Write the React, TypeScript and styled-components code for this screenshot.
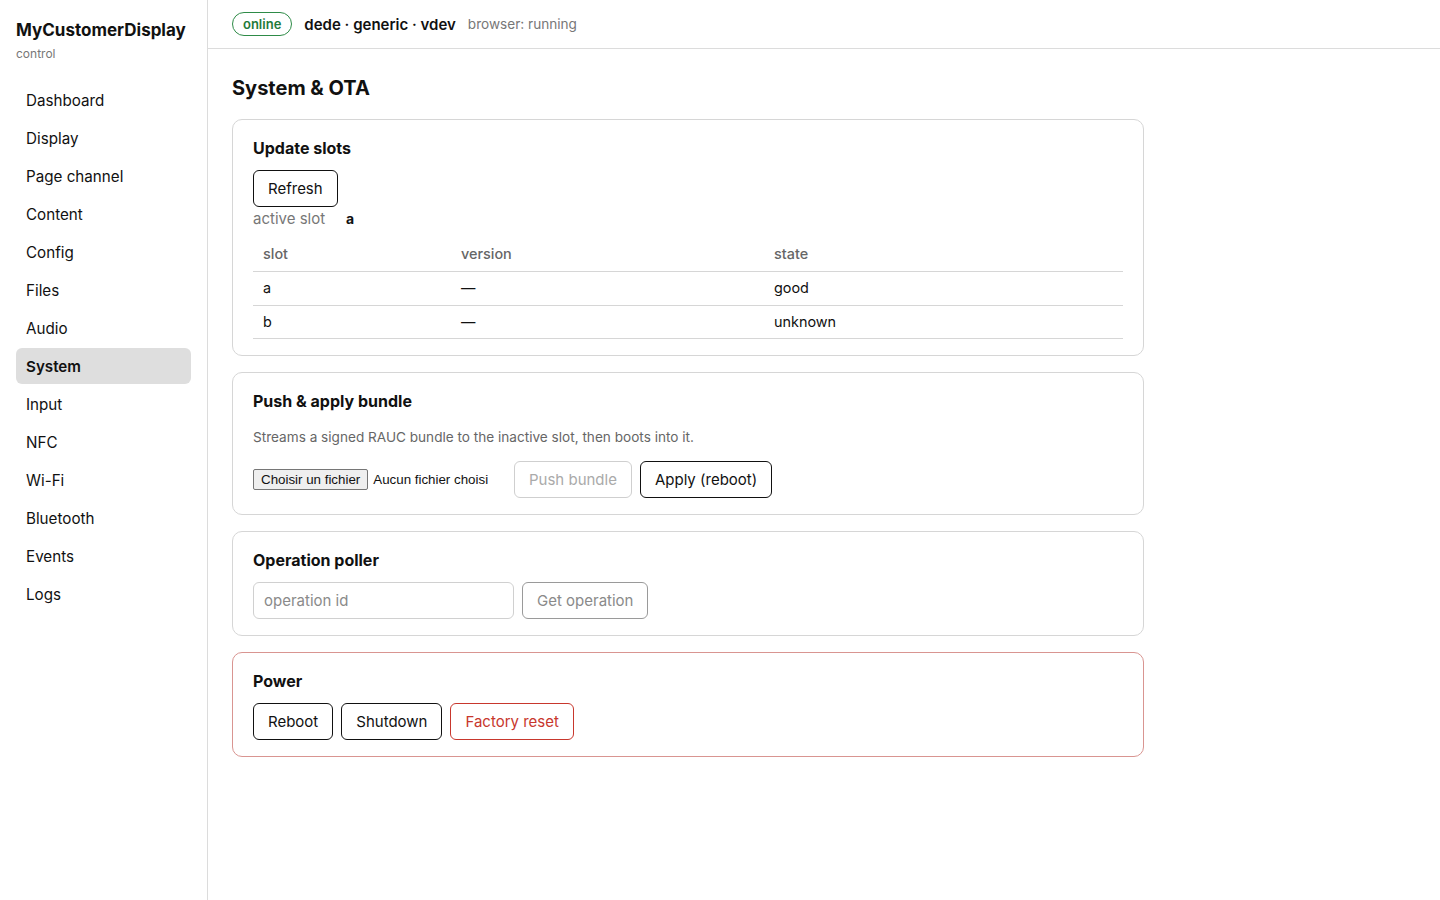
import React, { useState } from "react";
import styled, { createGlobalStyle, css } from "styled-components";

const GlobalStyle = createGlobalStyle`
  html, body {
    margin: 0;
    padding: 0;
    background: #ffffff;
    color: #111111;
    font-family: Inter, "Noto Sans", sans-serif;
  }
  * {
    box-sizing: border-box;
  }
`;

const Shell = styled.div`
  display: flex;
  min-height: 900px;
`;

const Sidebar = styled.aside`
  width: 208px;
  flex-shrink: 0;
  border-right: 1px solid #dcdcdc;
  padding: 20px 16px;
`;

const Brand = styled.div`
  font-size: 17px;
  font-weight: 700;
  line-height: 20px;
`;

const BrandSub = styled.div`
  margin-top: 6px;
  font-size: 12px;
  line-height: 16px;
  color: #777777;
`;

const Nav = styled.nav`
  margin-top: 20px;
  display: flex;
  flex-direction: column;
  gap: 2px;
`;

const NavItem = styled.a<{ $active?: boolean }>`
  display: flex;
  align-items: center;
  height: 36px;
  padding: 0 10px;
  border-radius: 6px;
  font-size: 15.2px;
  color: #111111;
  text-decoration: none;
  cursor: pointer;
  ${(p) =>
    p.$active &&
    css`
      background: #dedede;
      font-weight: 600;
    `}
`;

const Column = styled.div`
  flex: 1;
  display: flex;
  flex-direction: column;
`;

const TopBar = styled.header`
  height: 49px;
  border-bottom: 1px solid #dcdcdc;
  display: flex;
  align-items: center;
  gap: 12px;
  padding: 0 24px;
`;

const Badge = styled.span`
  display: inline-flex;
  align-items: center;
  height: 24px;
  padding: 0 10px;
  border: 1px solid #2e8b47;
  border-radius: 12px;
  color: #1f7a3a;
  font-size: 13px;
  font-weight: 600;
`;

const DeviceName = styled.span`
  font-size: 15px;
  font-weight: 600;
`;

const Muted = styled.span`
  font-size: 13.6px;
  color: #777777;
`;

const Main = styled.main`
  padding: 24px;
`;

const PageTitle = styled.h1`
  margin: 0 0 16px;
  font-size: 20px;
  line-height: 30px;
  font-weight: 700;
`;

const Stack = styled.div`
  max-width: 912px;
  display: flex;
  flex-direction: column;
  gap: 16px;
`;

const Card = styled.section<{ $danger?: boolean }>`
  border: 1px solid ${(p) => (p.$danger ? "#d99591" : "#d6d6d6")};
  border-radius: 10px;
  padding: 17px 20px 16px;
`;

const CardTitle = styled.h2`
  margin: 0 0 11px;
  font-size: 16px;
  line-height: 22px;
  font-weight: 700;
`;

const Description = styled.p`
  margin: 15px 0 14px;
  font-size: 13.6px;
  line-height: 20px;
  color: #666666;
`;

const Row = styled.div`
  display: flex;
  align-items: center;
  gap: 8px;
`;

const Button = styled.button<{ $variant?: "default" | "danger" | "muted" | "faint" }>`
  height: 37px;
  padding: 0 14px;
  border-radius: 6px;
  background: #ffffff;
  font-family: inherit;
  font-size: 15px;
  cursor: pointer;
  border: 1px solid #111111;
  color: #111111;
  ${(p) =>
    p.$variant === "danger" &&
    css`
      border-color: #c8372d;
      color: #c8372d;
    `}
  ${(p) =>
    p.$variant === "muted" &&
    css`
      border-color: #9a9a9a;
      color: #8a8a8a;
      cursor: default;
    `}
  ${(p) =>
    p.$variant === "faint" &&
    css`
      border-color: #cfcfcf;
      color: #aaaaaa;
      cursor: default;
    `}
`;

const SlotLine = styled.div`
  margin-top: 2px;
  display: flex;
  align-items: center;
  gap: 21px;
  line-height: 20px;
`;

const SlotLabel = styled.span`
  font-size: 15px;
  color: #777777;
`;

const SlotValue = styled.span`
  font-size: 14px;
  font-weight: 700;
`;

const Table = styled.table`
  margin-top: 8px;
  width: 100%;
  border-collapse: collapse;
  font-size: 14.4px;
`;

const Th = styled.th<{ $w?: number }>`
  text-align: left;
  font-weight: 500;
  color: #666666;
  padding: 8px 10px;
  line-height: 18px;
  border-bottom: 1px solid #d6d6d6;
  width: ${(p) => (p.$w ? `${p.$w}px` : "auto")};
`;

const Td = styled.td`
  padding: 8px 10px;
  line-height: 16.5px;
  border-bottom: 1px solid #d6d6d6;
`;

const FilePicker = styled.label`
  width: 253px;
  display: flex;
  align-items: center;
  gap: 5px;
  font-family: "Liberation Sans", Arial, sans-serif;
  font-size: 13.333px;
  color: #111111;
  cursor: pointer;
`;

const FileButton = styled.span`
  display: inline-flex;
  align-items: center;
  height: 21px;
  padding: 0 7px;
  border: 1px solid #767676;
  border-radius: 2px;
  background: #efefef;
`;

const HiddenFile = styled.input`
  display: none;
`;

const TextInput = styled.input`
  width: 261px;
  height: 37px;
  padding: 0 10px;
  border: 1px solid #d0d0d0;
  border-radius: 6px;
  font-family: inherit;
  font-size: 15px;
  color: #111111;
  outline: none;
  &::placeholder {
    color: #8a8a8a;
  }
`;

const navItems = [
  "Dashboard",
  "Display",
  "Page channel",
  "Content",
  "Config",
  "Files",
  "Audio",
  "System",
  "Input",
  "NFC",
  "Wi-Fi",
  "Bluetooth",
  "Events",
  "Logs",
];

const slots = [
  { slot: "a", version: "—", state: "good" },
  { slot: "b", version: "—", state: "unknown" },
];

export default function App() {
  const [active, setActive] = useState("System");
  const [fileName, setFileName] = useState("");
  const [operationId, setOperationId] = useState("");

  return (
    <>
      <GlobalStyle />
      <Shell>
        <Sidebar>
          <Brand>MyCustomerDisplay</Brand>
          <BrandSub>control</BrandSub>
          <Nav>
            {navItems.map((item) => (
              <NavItem key={item} $active={item === active} onClick={() => setActive(item)}>
                {item}
              </NavItem>
            ))}
          </Nav>
        </Sidebar>
        <Column>
          <TopBar>
            <Badge>online</Badge>
            <DeviceName>dede · generic · vdev</DeviceName>
            <Muted>browser: running</Muted>
          </TopBar>
          <Main>
            <PageTitle>System &amp; OTA</PageTitle>
            <Stack>
              <Card>
                <CardTitle>Update slots</CardTitle>
                <Button>Refresh</Button>
                <SlotLine>
                  <SlotLabel>active slot</SlotLabel>
                  <SlotValue>a</SlotValue>
                </SlotLine>
                <Table>
                  <thead>
                    <tr>
                      <Th $w={198}>slot</Th>
                      <Th $w={313}>version</Th>
                      <Th>state</Th>
                    </tr>
                  </thead>
                  <tbody>
                    {slots.map((s) => (
                      <tr key={s.slot}>
                        <Td>{s.slot}</Td>
                        <Td>{s.version}</Td>
                        <Td>{s.state}</Td>
                      </tr>
                    ))}
                  </tbody>
                </Table>
              </Card>

              <Card>
                <CardTitle>Push &amp; apply bundle</CardTitle>
                <Description>Streams a signed RAUC bundle to the inactive slot, then boots into it.</Description>
                <Row>
                  <FilePicker>
                    <HiddenFile
                      type="file"
                      onChange={(e) => setFileName(e.target.files?.[0]?.name ?? "")}
                    />
                    <FileButton>Choisir un fichier</FileButton>
                    <span>{fileName || "Aucun fichier choisi"}</span>
                  </FilePicker>
                  <Button $variant="faint" disabled>
                    Push bundle
                  </Button>
                  <Button>Apply (reboot)</Button>
                </Row>
              </Card>

              <Card>
                <CardTitle>Operation poller</CardTitle>
                <Row>
                  <TextInput
                    placeholder="operation id"
                    value={operationId}
                    onChange={(e) => setOperationId(e.target.value)}
                  />
                  <Button $variant="muted" disabled={!operationId}>
                    Get operation
                  </Button>
                </Row>
              </Card>

              <Card $danger>
                <CardTitle>Power</CardTitle>
                <Row>
                  <Button>Reboot</Button>
                  <Button>Shutdown</Button>
                  <Button $variant="danger">Factory reset</Button>
                </Row>
              </Card>
            </Stack>
          </Main>
        </Column>
      </Shell>
    </>
  );
}
